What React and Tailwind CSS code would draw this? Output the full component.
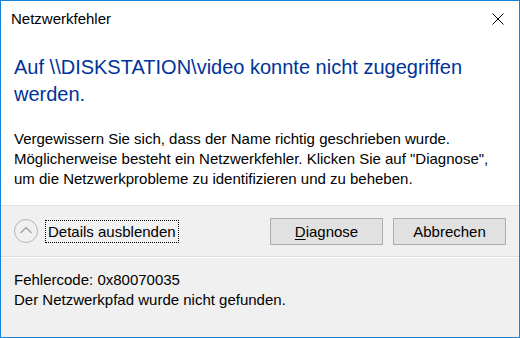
import { useState } from "react";

function CloseIcon() {
  return (
    <svg width="12" height="12" viewBox="0 0 12 12" className="block">
      <path d="M0.5 0.5 L11.5 11.5 M11.5 0.5 L0.5 11.5" stroke="#000" strokeWidth="1" fill="none" />
    </svg>
  );
}

function ChevronCircle({ open }) {
  return (
    <svg width="24" height="24" viewBox="0 0 24 24" className="block">
      <circle cx="12" cy="12" r="11.5" fill="#f0f0f0" stroke="#b4b4b4" strokeWidth="1" />
      <path
        d={open ? "M6.5 14 L12 8.5 L17.5 14" : "M6.5 10 L12 15.5 L17.5 10"}
        stroke="#9a9a9a"
        strokeWidth="1.2"
        fill="none"
      />
    </svg>
  );
}

export default function App() {
  const [showDetails, setShowDetails] = useState(true);

  return (
    <div className="w-[520px] h-[338px] border border-[#1883d7] bg-white flex flex-col font-['Segoe_UI','Liberation_Sans',sans-serif] text-[15px] leading-[20px] text-black overflow-hidden">
      {/* title bar */}
      <div className="flex items-start justify-between pl-[10px] pr-[15px] pt-[8px]">
        <span>Netzwerkfehler</span>
        <button className="mt-[4px]">
          <CloseIcon />
        </button>
      </div>

      {/* content */}
      <div className="px-[13px] pt-[25px] pb-[16px]">
        <h1 className="text-[20px] leading-[27px] text-[#003399] pr-[40px]">
          Auf \\DISKSTATION\video konnte nicht zugegriffen werden.
        </h1>
        <p className="mt-[21px]">
          Vergewissern Sie sich, dass der Name richtig geschrieben wurde.
          <br />
          Möglicherweise besteht ein Netzwerkfehler. Klicken Sie auf "Diagnose",
          <br />
          um die Netzwerkprobleme zu identifizieren und zu beheben.
        </p>
      </div>

      {/* button row */}
      <div className="h-[51px] bg-[#f0f0f0] border-t border-[#e3e3e3] flex items-center pl-[13px] pr-[13px]">
        <button onClick={() => setShowDetails((v) => !v)} className="flex items-center gap-[7px]">
          <ChevronCircle open={showDetails} />
          <span className="border border-dotted border-black px-[2px] h-[23px] leading-[21px]">
            Details ausblenden
          </span>
        </button>
        <div className="ml-auto flex gap-[10px]">
          <button className="w-[113px] h-[27px] bg-[#e1e1e1] border border-[#adadad] leading-[25px]">
            <span className="underline underline-offset-2">D</span>iagnose
          </button>
          <button className="w-[113px] h-[27px] bg-[#e1e1e1] border border-[#adadad] leading-[25px]">
            Abbrechen
          </button>
        </div>
      </div>

      {/* details */}
      <div className="flex-1 bg-[#f0f0f0] border-t border-[#dcdcdc] shadow-[inset_0_1px_0_#ffffff] px-[13px] pt-[13px]">
        {showDetails && (
          <>
            <div>Fehlercode: 0x80070035</div>
            <div>Der Netzwerkpfad wurde nicht gefunden.</div>
          </>
        )}
      </div>
    </div>
  );
}
